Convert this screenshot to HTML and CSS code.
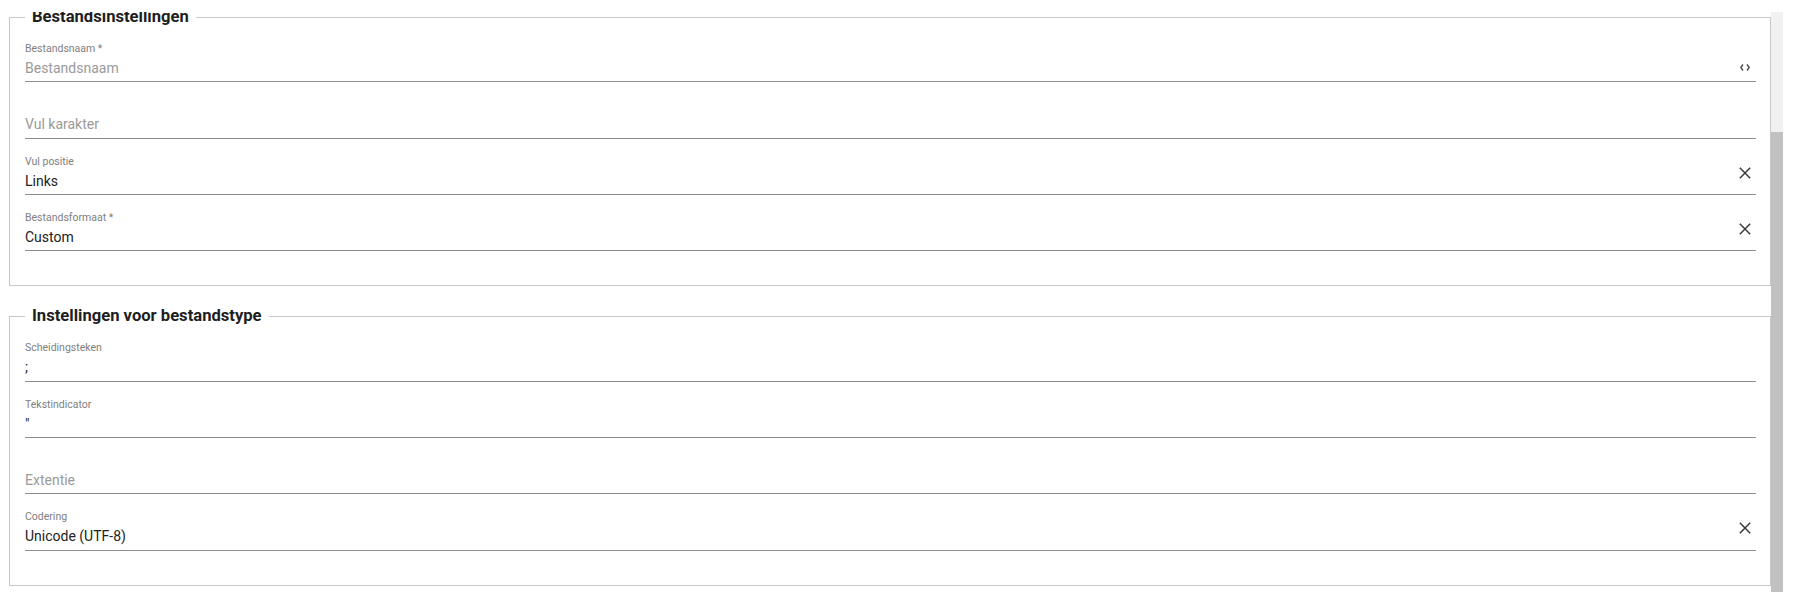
FILE: index.html
```html
<!DOCTYPE html>
<html lang="nl">

<head>
    <meta charset="UTF-8">
    <meta name="viewport" content="width=device-width, initial-scale=1.0">
    <title>Bestandsinstellingen</title>
    <link rel="stylesheet" href="styles.css">
</head>

<body>
    <div class="viewport">
        <div class="scroll-area">
            <fieldset class="settings-group first">
                <legend>Bestandsinstellingen</legend>
                <div class="fields">
                    <div class="field">
                        <div class="field-main">
                            <label class="field-label">Bestandsnaam *</label>
                            <div class="field-value placeholder">Bestandsnaam</div>
                        </div>
                        <svg class="icon-code" width="10" height="7" viewBox="0 0 10 7">
                            <path d="M3 0.5 L0.8 3.5 L3 6.5 M7 0.5 L9.2 3.5 L7 6.5" fill="none" stroke="#444" stroke-width="1.3" />
                        </svg>
                    </div>
                    <div class="field">
                        <div class="field-main">
                            <label class="field-label"></label>
                            <div class="field-value placeholder">Vul karakter</div>
                        </div>
                    </div>
                    <div class="field">
                        <div class="field-main">
                            <label class="field-label">Vul positie</label>
                            <div class="field-value">Links</div>
                        </div>
                        <svg class="icon-clear" width="12" height="12" viewBox="0 0 12 12">
                            <path d="M0.8 0.8 L11.2 11.2 M11.2 0.8 L0.8 11.2" stroke="#333" stroke-width="1.4" />
                        </svg>
                    </div>
                    <div class="field">
                        <div class="field-main">
                            <label class="field-label">Bestandsformaat *</label>
                            <div class="field-value">Custom</div>
                        </div>
                        <svg class="icon-clear" width="12" height="12" viewBox="0 0 12 12">
                            <path d="M0.8 0.8 L11.2 11.2 M11.2 0.8 L0.8 11.2" stroke="#333" stroke-width="1.4" />
                        </svg>
                    </div>
                </div>
            </fieldset>

            <fieldset class="settings-group">
                <legend>Instellingen voor bestandstype</legend>
                <div class="fields">
                    <div class="field">
                        <div class="field-main">
                            <label class="field-label">Scheidingsteken</label>
                            <div class="field-value">;</div>
                        </div>
                    </div>
                    <div class="field">
                        <div class="field-main">
                            <label class="field-label">Tekstindicator</label>
                            <div class="field-value">"</div>
                        </div>
                    </div>
                    <div class="field">
                        <div class="field-main">
                            <label class="field-label"></label>
                            <div class="field-value placeholder">Extentie</div>
                        </div>
                    </div>
                    <div class="field">
                        <div class="field-main">
                            <label class="field-label">Codering</label>
                            <div class="field-value">Unicode (UTF-8)</div>
                        </div>
                        <svg class="icon-clear" width="12" height="12" viewBox="0 0 12 12">
                            <path d="M0.8 0.8 L11.2 11.2 M11.2 0.8 L0.8 11.2" stroke="#333" stroke-width="1.4" />
                        </svg>
                    </div>
                </div>
            </fieldset>
        </div>

        <div class="scrollbar">
            <div class="scrollbar-thumb"></div>
        </div>
    </div>
</body>

</html>
```

FILE: styles.css
```css
* {
    box-sizing: border-box;
}

body {
    margin: 0;
    font-family: Roboto, "Noto Sans", sans-serif;
    background-color: #fff;
    color: #212121;
    overflow: hidden;
}

.viewport {
    display: flex;
    width: 1783px;
    height: 580px;
    margin-top: 12px;
}

.scroll-area {
    flex: 1;
    overflow: hidden;
    padding-left: 9px;
}

.settings-group {
    margin: 0 0 23px;
    padding: 0 14px 34px 15px;
    border: 1px solid #c8c8c8;
    min-width: 0;
}

.settings-group.first {
    margin-top: -3px;
    margin-bottom: 22px;
}

.settings-group legend {
    padding: 0 7px;
    font-size: 16.6px;
    line-height: 16px;
    font-weight: 700;
    color: #1e1e1e;
}

.fields {
    margin-top: 1px;
}

/* One input row, underline at the bottom */
.field {
    display: flex;
    align-items: flex-start;
    height: 56.33px;
    padding-top: 17px;
    border-bottom: 1px solid #8d8d8d;
}

.field-main {
    flex: 1;
}

.field-label {
    display: block;
    height: 12px;
    font-size: 10.5px;
    line-height: 12px;
    color: #808080;
}

.field-value {
    margin-top: 3px;
    font-size: 14px;
    line-height: 20px;
    color: #222;
}

.field-value.placeholder {
    color: #9a9a9a;
}

.icon-code {
    margin-top: 21px;
    margin-right: 6px;
}

.icon-clear {
    margin-top: 11px;
    margin-right: 5px;
}

.scrollbar {
    width: 12px;
    display: flex;
    flex-direction: column;
    background-color: #f1f1f1;
}

.scrollbar-thumb {
    flex: 1;
    margin-top: 120px;
    background-color: #c1c1c1;
}
```
